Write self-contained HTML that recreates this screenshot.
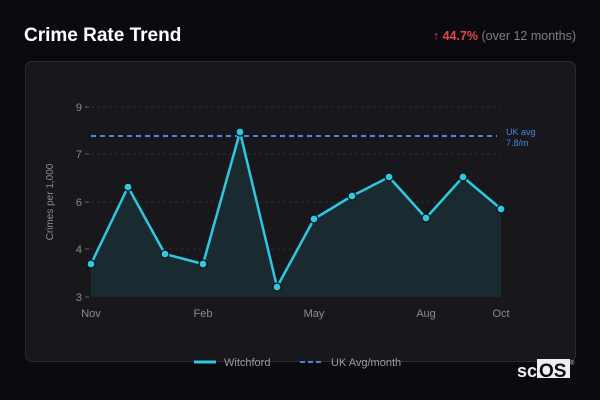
<!DOCTYPE html>
<html><head><style>
body{margin:0;width:600px;height:400px;background:#0b0b0f;font-family:"Liberation Sans","DejaVu Sans",sans-serif;overflow:hidden;position:relative}
.t{position:absolute;left:24px;top:25px;color:#fff;font-weight:bold;font-size:19px;font-family:"Liberation Sans",sans-serif}
.r{position:absolute;right:24px;top:29px;font-size:12.5px;color:#7d7d85}
.r b{color:#e0474c}
.card{position:absolute;left:25px;top:61px;width:549px;height:299px;border:1px solid #2b2b31;border-radius:7px;background:#18181c}
svg{position:absolute;left:0;top:0}
</style></head><body>
<div class="t">Crime Rate Trend</div>
<div class="r"><b>↑ 44.7%</b> (over 12 months)</div>
<div class="card"></div>
<svg width="600" height="400" font-family="Liberation Sans, sans-serif">
<g stroke="#2a2a30" stroke-dasharray="3,3" stroke-width="1">
<line x1="91" y1="107" x2="501" y2="107"/><line x1="91" y1="154" x2="501" y2="154"/><line x1="91" y1="202" x2="501" y2="202"/><line x1="91" y1="249" x2="501" y2="249"/></g>
<g fill="#8a8a92" font-size="11" text-anchor="end">
<text x="82" y="111">9</text><text x="82" y="158">7</text><text x="82" y="206">6</text><text x="82" y="253">4</text><text x="82" y="301">3</text></g>
<g stroke="#666" ><line x1="85" y1="107" x2="89" y2="107"/><line x1="85" y1="154" x2="89" y2="154"/><line x1="85" y1="202" x2="89" y2="202"/><line x1="85" y1="249" x2="89" y2="249"/><line x1="85" y1="297" x2="89" y2="297"/></g>
<text x="53" y="202" fill="#8a8a92" font-size="10" text-anchor="middle" transform="rotate(-90 53 202)">Crimes per 1,000</text>
<polygon fill="#192a31" points="91,297 91,264 128,187 165,254 203,264 240,132 277,287 314,219 352,196 389,177 426,218 463,177 501,209 501,297"/>
<line x1="91" y1="136" x2="497" y2="136" stroke="#4a84e0" stroke-width="2" stroke-dasharray="5,4"/>
<text x="506" y="135" fill="#4a84e0" font-size="9">UK avg</text><text x="506" y="146" fill="#4a84e0" font-size="9">7.8/m</text>
<polyline fill="none" stroke="#2ec8e0" stroke-width="2.5" stroke-linejoin="round" points="91,264 128,187 165,254 203,264 240,132 277,287 314,219 352,196 389,177 426,218 463,177 501,209"/>
<g fill="#2ec8e0" stroke="#111" stroke-width="1.2">
<circle cx="91" cy="264" r="4"/><circle cx="128" cy="187" r="4"/><circle cx="165" cy="254" r="4"/><circle cx="203" cy="264" r="4"/><circle cx="240" cy="132" r="4"/><circle cx="277" cy="287" r="4"/><circle cx="314" cy="219" r="4"/><circle cx="352" cy="196" r="4"/><circle cx="389" cy="177" r="4"/><circle cx="426" cy="218" r="4"/><circle cx="463" cy="177" r="4"/><circle cx="501" cy="209" r="4"/></g>
<g fill="#8a8a92" font-size="11" text-anchor="middle">
<text x="91" y="317">Nov</text><text x="203" y="317">Feb</text><text x="314" y="317">May</text><text x="426" y="317">Aug</text><text x="501" y="317">Oct</text></g>
<line x1="194" y1="362" x2="216" y2="362" stroke="#2ec8e0" stroke-width="3"/>
<text x="224" y="366" fill="#9a9aa2" font-size="11">Witchford</text>
<line x1="300" y1="362" x2="322" y2="362" stroke="#4a84e0" stroke-width="2" stroke-dasharray="5,3"/>
<text x="331" y="366" fill="#9a9aa2" font-size="11">UK Avg/month</text>
<text x="517" y="377" fill="#eee" font-size="18" font-weight="bold">sc</text>
<rect x="537" y="359" width="33" height="19" fill="#eee"/>
<text x="539" y="377" fill="#0b0b0f" font-size="19" font-weight="bold">OS</text>
<text x="570" y="365" fill="#ccc" font-size="6">®</text>
</svg>
</body></html>
